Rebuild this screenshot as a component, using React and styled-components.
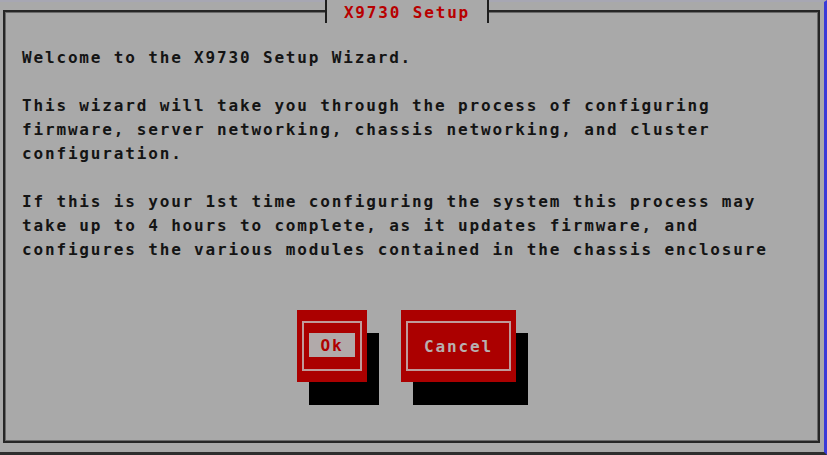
import React from 'react';
import styled, { createGlobalStyle } from 'styled-components';

const GlobalStyle = createGlobalStyle`
  html, body {
    margin: 0;
    padding: 0;
    background: #aaaaaa;
  }
`;

const vga = `
  font-family: "DejaVu Sans Mono", "Liberation Mono", monospace;
  font-weight: bold;
  font-size: 16px;
  letter-spacing: 1.84px;
`;

const Screen = styled.div`
  width: 827px;
  height: 455px;
  box-sizing: border-box;
  background: #a9a9a9;
  border-top: 2px solid #a7a7b3;
  border-right: 3px solid #3a3ad8;
  border-bottom: 3px solid #2e2e2e;
  padding: 8px 4px 0 3px;
  display: flex;
  flex-direction: column;
`;

const Frame = styled.div`
  position: relative;
  height: 433px;
  box-sizing: border-box;
  border: 2px solid #262626;
  box-shadow: inset 0 0 0 1px #6a6a6a;
  padding: 34px 17px 0;
  display: flex;
  flex-direction: column;
`;

const Title = styled.div`
  position: absolute;
  top: -12px;
  left: 320px;
  width: 160px;
  height: 23px;
  border-left: 2px solid #1e1e1e;
  border-right: 2px solid #1e1e1e;
  background: #a9a9a9;
  ${vga}
  line-height: 25px;
  color: #b80000;
  text-align: center;
`;

const Paragraph = styled.p`
  margin: 0 0 24px;
  ${vga}
  line-height: 24px;
  color: #141414;
  white-space: pre;
`;

const ButtonRow = styled.div`
  display: flex;
  justify-content: center;
  gap: 34px;
  margin-top: 24px;
  padding-right: 10px;
`;

const Button = styled.div`
  width: ${p => p.$w}px;
  height: 72px;
  box-sizing: border-box;
  background: #ab0000;
  box-shadow: 12px 23px 0 #000;
  padding: 11px 5px;
  display: flex;
`;

const Inner = styled.div`
  flex: 1;
  border: 2px solid #c09a9a;
  display: flex;
  align-items: center;
  justify-content: center;
  ${vga}
  color: #b8b0b0;
`;

const OkLabel = styled.div`
  width: 46px;
  height: 24px;
  margin-top: -2px;
  background: #b1aaaa;
  color: #b00000;
  display: flex;
  align-items: center;
  justify-content: center;
  ${vga}
`;

export default function App() {
  return (
    <>
      <GlobalStyle />
      <Screen>
        <Frame>
          <Title>X9730 Setup</Title>
          <Paragraph>Welcome to the X9730 Setup Wizard.</Paragraph>
          <Paragraph>
            {'This wizard will take you through the process of configuring\nfirmware, server networking, chassis networking, and cluster\nconfiguration.'}
          </Paragraph>
          <Paragraph>
            {'If this is your 1st time configuring the system this process may\ntake up to 4 hours to complete, as it updates firmware, and\nconfigures the various modules contained in the chassis enclosure'}
          </Paragraph>
          <ButtonRow>
            <Button $w={70}>
              <Inner>
                <OkLabel>Ok</OkLabel>
              </Inner>
            </Button>
            <Button $w={115}>
              <Inner>Cancel</Inner>
            </Button>
          </ButtonRow>
        </Frame>
      </Screen>
    </>
  );
}
